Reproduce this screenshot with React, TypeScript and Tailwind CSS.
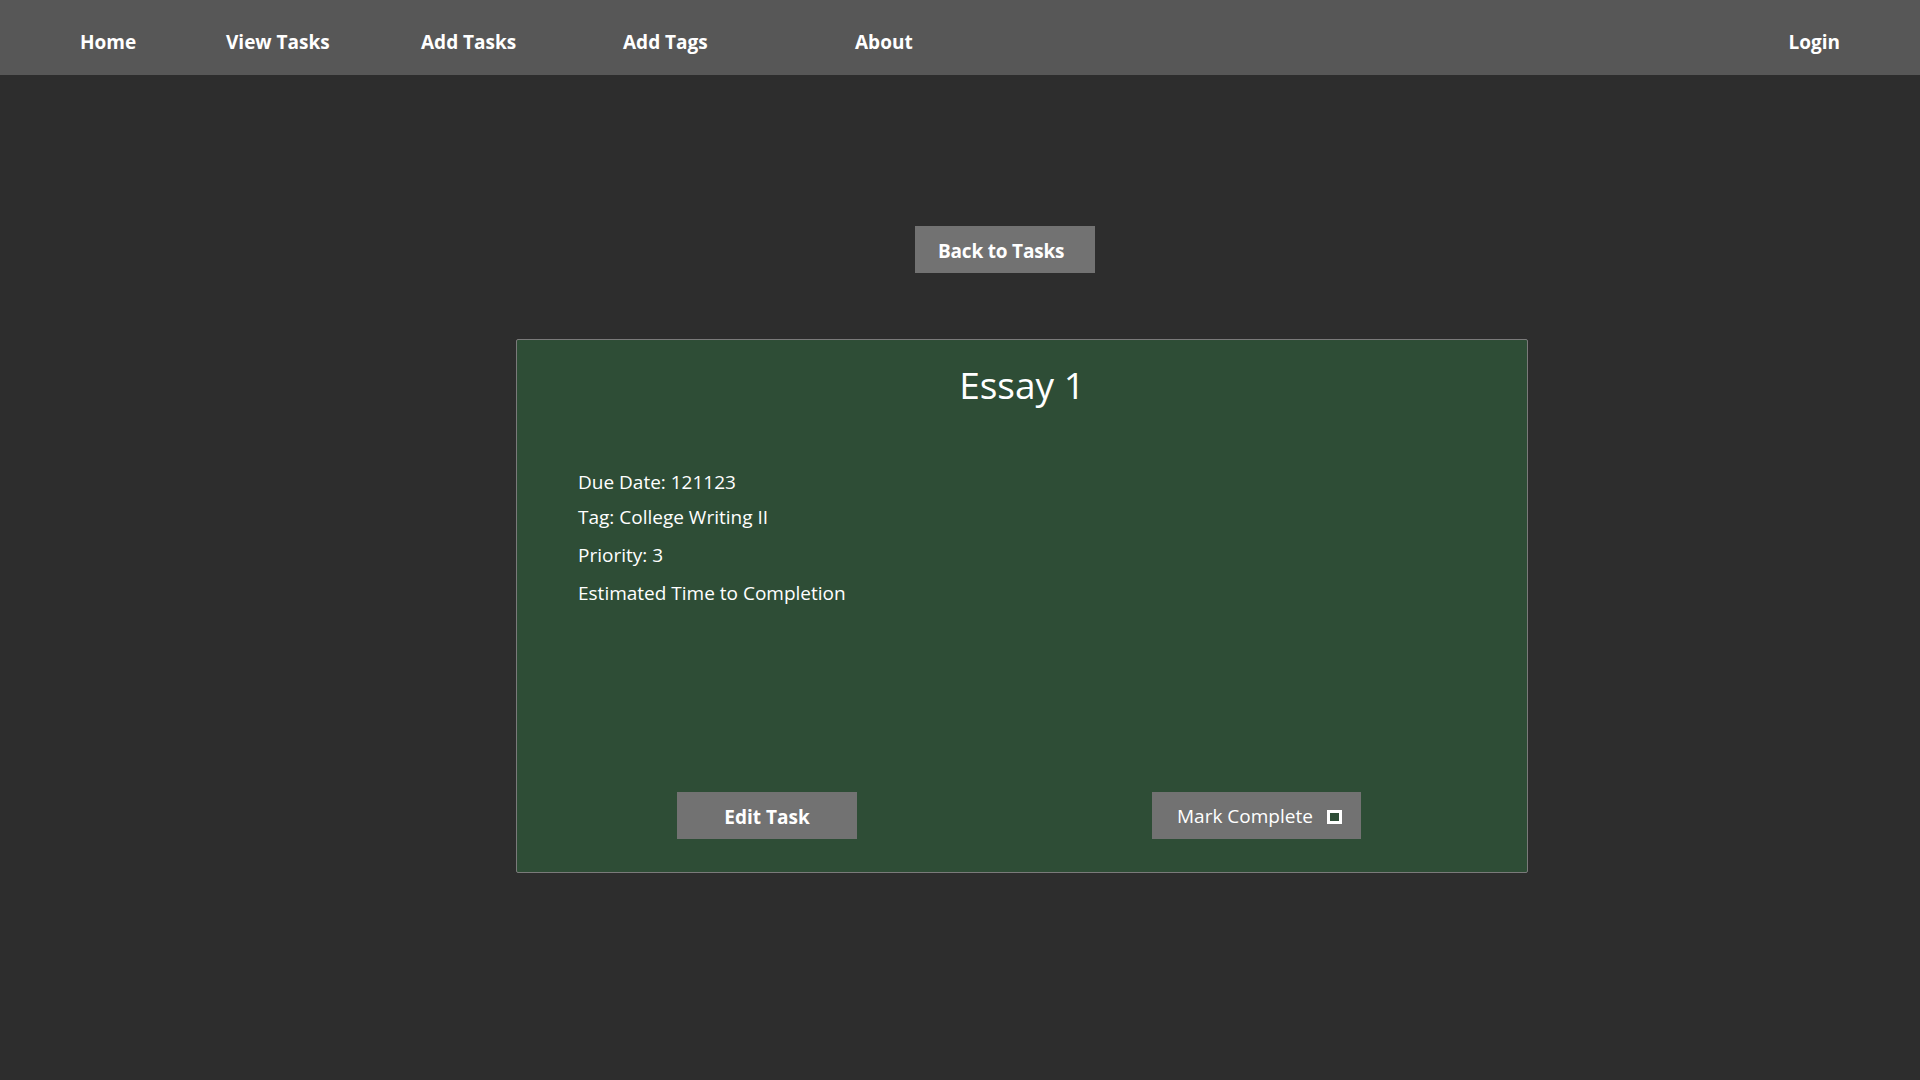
import React from 'react';

const navLinks = [
  { label: 'Home', width: 'w-[146px]' },
  { label: 'View Tasks', width: 'w-[195px]' },
  { label: 'Add Tasks', width: 'w-[202px]' },
  { label: 'Add Tags', width: 'w-[232px]' },
  { label: 'About', width: 'w-[120px]' },
];

function NavBar() {
  return (
    <nav className="h-[75px] bg-[#575757] flex items-center pl-[80px] pr-[80px] pt-[9px]">
      {navLinks.map((link) => (
        <a key={link.label} href="#" className={`${link.width} text-white font-bold text-[19px] leading-[28px]`}>
          {link.label}
        </a>
      ))}
      <a href="#" className="ml-auto text-white font-bold text-[19px] leading-[28px]">
        Login
      </a>
    </nav>
  );
}

function TaskCard() {
  return (
    <div className="w-[1012px] h-[534px] bg-[#2e4d36] border border-[#7a7a7a] rounded-[2px] flex flex-col">
      <h1 className="text-center text-white text-[37px] leading-[37px] pt-[26px]">Essay 1</h1>

      <div className="pl-[61px] mt-[65px] text-white text-[19px] leading-[28px]">
        <p className="mb-[7px]">Due Date: 121123</p>
        <p className="mb-[10px]">Tag: College Writing II</p>
        <p className="mb-[10px]">Priority: 3</p>
        <p>Estimated Time to Completion</p>
      </div>

      <div className="mt-auto pb-[33px] pl-[160px] flex">
        <button className="w-[180px] h-[47px] bg-[#727272] text-white font-bold text-[19px] pt-[3px]">
          Edit Task
        </button>
        <button className="ml-[295px] w-[209px] h-[47px] bg-[#727272] text-white text-[19px] flex items-center pl-[25px] pt-[2px]">
          <span>Mark Complete</span>
          <span className="ml-auto mr-[19px] w-[15px] h-[14px] border-[3px] border-white bg-[#2e4d36]" />
        </button>
      </div>
    </div>
  );
}

export default function App() {
  return (
    <div className="min-h-screen bg-[#2d2d2d]" style={{ fontFamily: '"Open Sans", "Noto Sans", sans-serif' }}>
      <NavBar />
      <div className="flex justify-center pl-[90px] pt-[151px]">
        <button className="w-[180px] h-[47px] bg-[#727272] text-white font-bold text-[19px] pl-[23px] pt-[3px] tracking-[-0.2px] text-left whitespace-nowrap">
          Back to Tasks
        </button>
      </div>
      <div className="flex justify-center pl-[124px] pt-[66px]">
        <TaskCard />
      </div>
    </div>
  );
}
